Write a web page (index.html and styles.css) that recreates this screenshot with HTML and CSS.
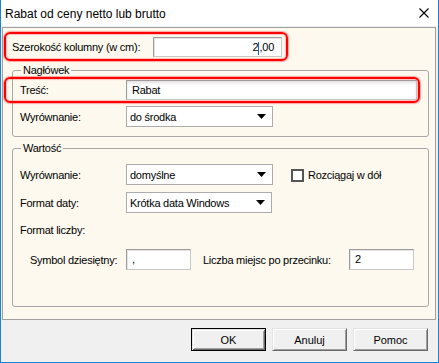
FILE: index.html
```html
<!DOCTYPE html>
<html lang="pl">
<head>
<meta charset="utf-8">
<title>Rabat od ceny netto lub brutto</title>
<link rel="stylesheet" href="styles.css">
</head>
<body>
<div class="window">
  <div class="titlebar">
    <span class="title">Rabat od ceny netto lub brutto</span>
    <svg class="close" width="10" height="10" viewBox="0 0 10 10"><path d="M0.5 0.5 L9.5 9.5 M9.5 0.5 L0.5 9.5" stroke="#000" stroke-width="1.1" fill="none"/></svg>
  </div>
  <div class="panel">
    <div class="row row-width">
      <span class="lbl lbl-width">Szerokość kolumny (w cm):</span>
      <div class="input input-width"><span>2</span><span class="caret"></span><span>,00</span></div>
    </div>
    <fieldset class="group group-header">
      <legend>Nagłówek</legend>
      <div class="row row-text">
        <span class="lbl lbl-g">Treść:</span>
        <div class="input input-text">Rabat</div>
      </div>
      <div class="row row-align">
        <span class="lbl lbl-g">Wyrównanie:</span>
        <div class="select"><span>do środka</span><svg class="arrow" width="9" height="5" viewBox="0 0 9 5"><path d="M0 0 H9 L4.5 5 Z" fill="#000"/></svg></div>
      </div>
    </fieldset>
    <fieldset class="group group-value">
      <legend>Wartość</legend>
      <div class="row row-v1">
        <span class="lbl lbl-g">Wyrównanie:</span>
        <div class="select"><span>domyślne</span><svg class="arrow" width="9" height="5" viewBox="0 0 9 5"><path d="M0 0 H9 L4.5 5 Z" fill="#000"/></svg></div>
        <div class="check"><span class="box"></span><span>Rozciągaj w dół</span></div>
      </div>
      <div class="row row-v2">
        <span class="lbl lbl-g">Format daty:</span>
        <div class="select select-date"><span>Krótka data Windows</span><svg class="arrow" width="9" height="5" viewBox="0 0 9 5"><path d="M0 0 H9 L4.5 5 Z" fill="#000"/></svg></div>
      </div>
      <div class="row row-v3">
        <span class="lbl lbl-g">Format liczby:</span>
      </div>
      <div class="row row-v4">
        <span class="lbl lbl-sym">Symbol dziesiętny:</span>
        <div class="input input-small">,</div>
        <span class="lbl lbl-dec">Liczba miejsc po przecinku:</span>
        <div class="input input-small">2</div>
      </div>
    </fieldset>
    <div class="ring ring-1"></div>
    <div class="ring ring-2"></div>
  </div>
  <div class="footer">
    <button class="btn btn-default">OK</button>
    <button class="btn">Anuluj</button>
    <button class="btn">Pomoc</button>
  </div>
</div>
</body>
</html>
```
FILE: styles.css
```css
* { box-sizing: border-box; }
html, body { margin: 0; padding: 0; background: #f0f0f0; }
body {
  font-family: "Liberation Sans", Arial, sans-serif;
  font-size: 11px;
  letter-spacing: -0.25px;
  color: #000;
}
.window {
  width: 439px;
  height: 363px;
  border: 1px solid #1883d7;
  border-top: none;
  background: #f0f0f0;
  display: flex;
  flex-direction: column;
}
.titlebar {
  height: 26px;
  background: #fff;
  display: flex;
  align-items: center;
  padding-left: 4px;
  flex: none;
}
.title { font-size: 12px; line-height: 14px; padding-top: 1px; letter-spacing: 0; }
.close { margin-left: auto; margin-right: 9px; }

.panel {
  position: relative;
  height: 293px;
  margin: 1px 2px 0 1px;
  border: 1px solid #a0a0a0;
  background: #fdf9ee;
  flex: none;
}
.row { display: flex; align-items: center; }
.lbl { white-space: nowrap; line-height: 14px; }

.row-width { margin-top: 9px; padding-left: 9px; height: 20px; }
.lbl-width { width: 141px; }
.input {
  background: #fff;
  border: 1px solid #9c9c9c;
  border-right-color: #c8c8c8;
  border-bottom-color: #c8c8c8;
  box-shadow: inset 1px 1px 0 #e6e6e6;
  height: 20px;
  line-height: 18px;
  padding: 0 4px;
  white-space: nowrap;
}
.input-width {
  width: 129px;
  display: flex;
  justify-content: flex-end;
  align-items: center;
  padding-right: 7px;
}
.caret { display: inline-block; width: 1px; height: 13px; background: #1a5fd1; margin: 2px 0 0 0; }

.group {
  margin: 6px 6px 0 9px;
  padding: 0;
  min-width: 0;
  border: 1px solid #a8a8a8;
  border-radius: 3px;
}
.group legend {
  margin-left: 8px;
  padding: 0 2px;
  line-height: 14px;
  font-size: 11px;
}
.group-header { padding: 3px 0 9px 0; }
.group-value { margin-top: 4px; padding: 9px 0 36px 0; }

.lbl-g { padding-left: 7px; width: 113px; }
.row-text { height: 20px; }
.input-text {
  width: 291px;
  box-shadow: inset 0 2px 3px rgba(0,0,0,0.12);
  padding-left: 5px;
}
.row-align { margin-top: 6px; height: 21px; }
.select {
  width: 147px;
  height: 21px;
  background: #fff;
  border: 1px solid #acacac;
  display: flex;
  align-items: center;
  padding: 0 6px 0 3px;
  white-space: nowrap;
}
.select span { flex: 1; }
.select-date { width: 146px; }
.arrow { flex: none; margin-right: 0; }

.row-v1 { height: 21px; }
.check { display: flex; align-items: center; margin-left: 18px; }
.box {
  width: 13px; height: 13px;
  border: 2px solid #555;
  background: #fff;
  margin-right: 4px;
  margin-top: 1px;
}
.row-v2 { margin-top: 7px; height: 21px; }
.row-v3 { margin-top: 10px; height: 14px; }
.row-v4 { margin-top: 12px; height: 21px; }
.lbl-sym { padding-left: 17px; width: 113px; }
.input-small { width: 65px; height: 21px; line-height: 19px; padding-left: 5px; }
.lbl-dec { margin-left: 12px; width: 146px; }

.ring {
  position: absolute;
  border: 2px solid #ff0000;
  border-radius: 6px;
  box-shadow: 0 0 1px 1px rgba(255, 60, 60, 0.45), inset 0 0 1px 1px rgba(255, 90, 90, 0.35);
  pointer-events: none;
}
.ring-1 { left: 1px; top: 4px; width: 284px; height: 29px; }
.ring-2 { left: 1px; top: 49px; width: 416px; height: 26px; }

.footer {
  height: 42px;
  display: flex;
  justify-content: flex-end;
  align-items: flex-start;
  gap: 6px;
  padding: 8px 10px 0 0;
  flex: none;
}
.btn {
  width: 75px;
  height: 23px;
  font-family: "Liberation Sans", Arial, sans-serif;
  font-size: 11px;
  letter-spacing: 0;
  color: #000;
  background: #f0f0f0;
  border: 1px solid;
  border-color: #e3e3e3 #696969 #696969 #e3e3e3;
  box-shadow: inset 1px 1px 0 #fff, inset -1px -1px 0 #a0a0a0;
  padding: 0;
  margin: 0;
}
.btn-default {
  border: 1px solid #000;
  box-shadow: inset 1px 1px 0 #e3e3e3, inset -1px -1px 0 #696969, inset 2px 2px 0 #fff, inset -2px -2px 0 #a0a0a0;
}
```
